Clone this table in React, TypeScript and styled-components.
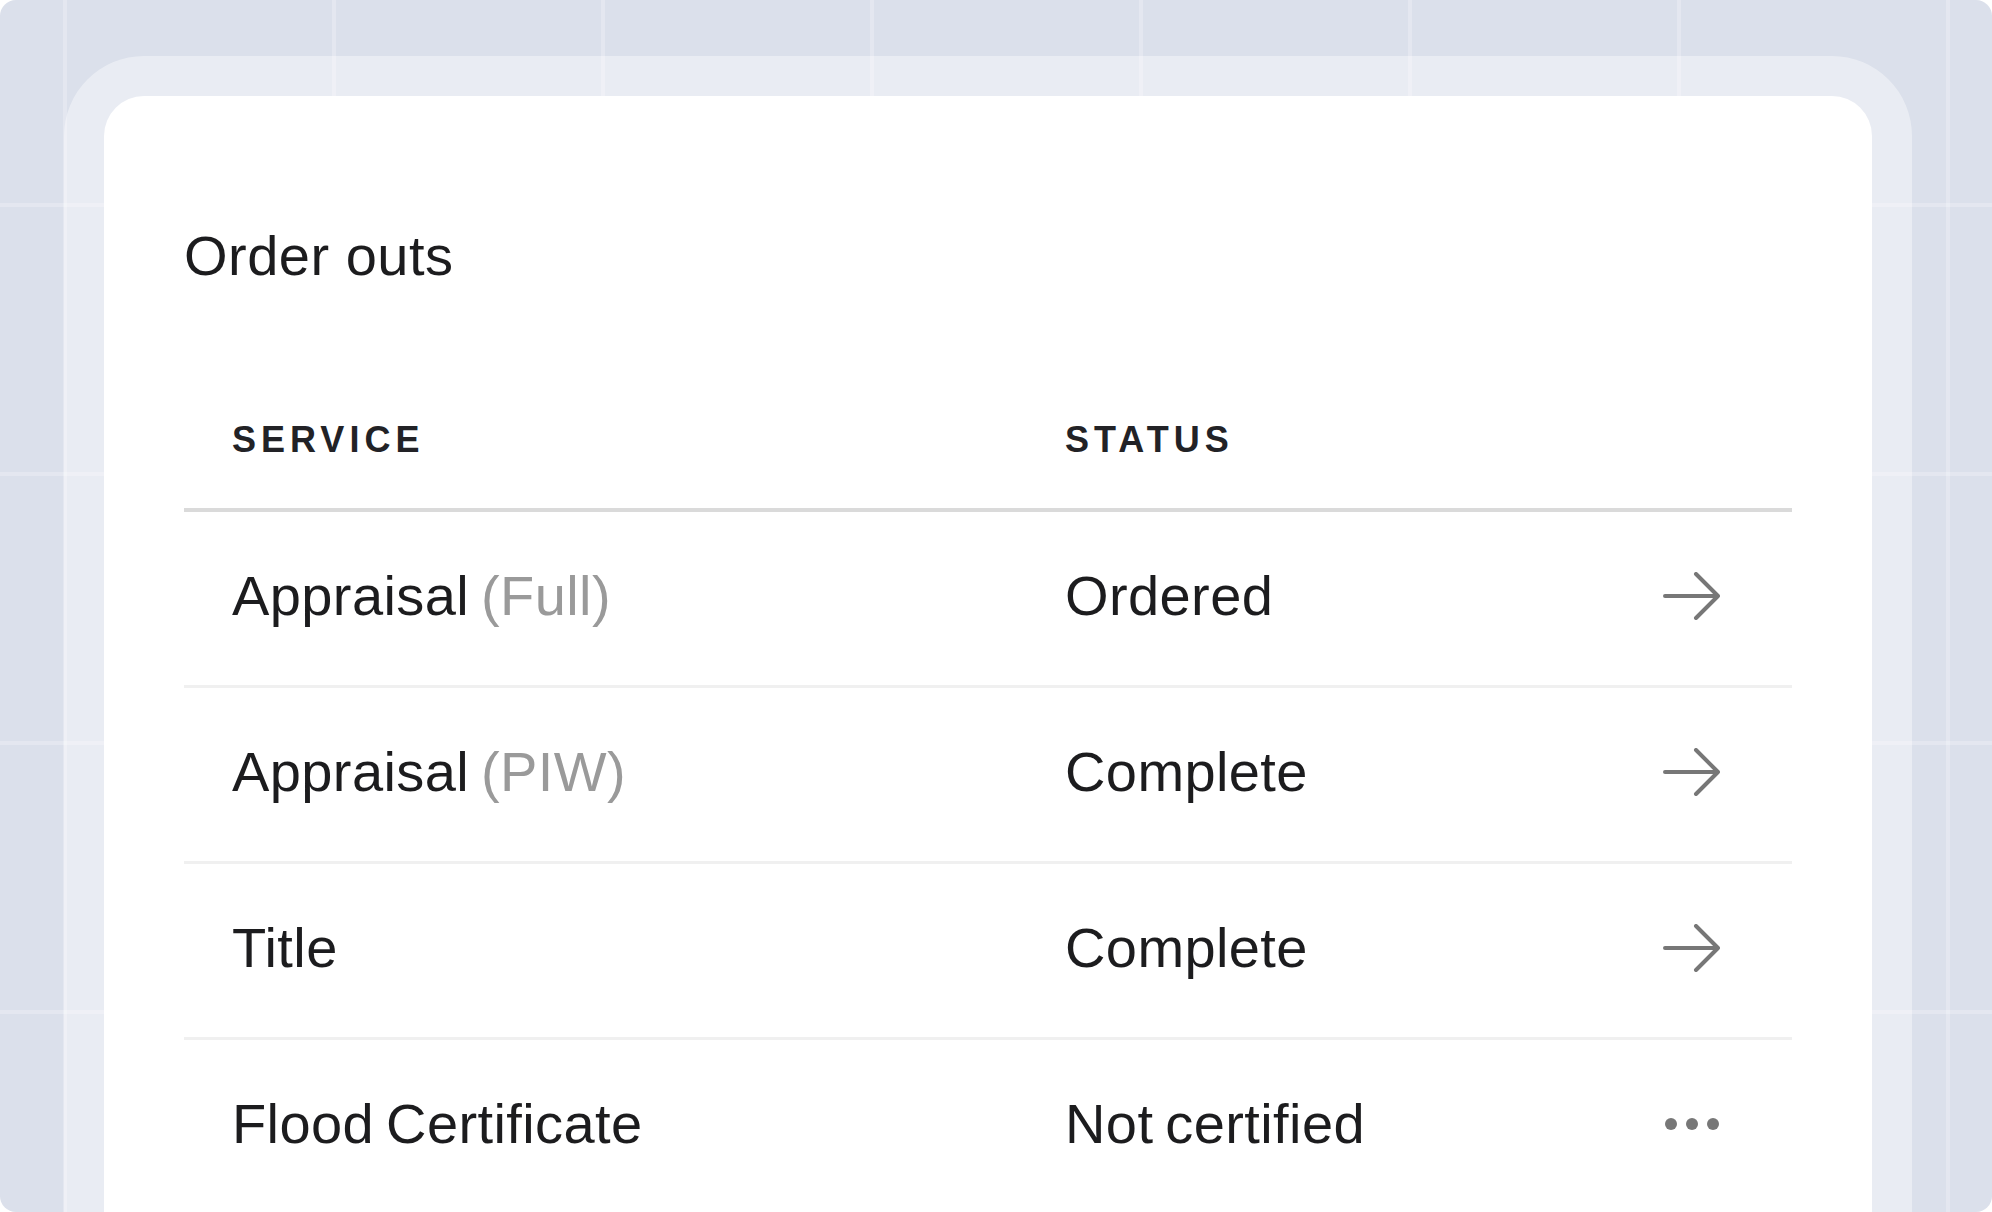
import React from "react";
import styled, { createGlobalStyle } from "styled-components";

const Global = createGlobalStyle`
  html, body { margin: 0; padding: 0; background: #ffffff; }
  body { font-family: "Liberation Sans", Arial, Helvetica, sans-serif; }
  * { box-sizing: border-box; }
`;

const Canvas = styled.div`
  width: 1992px;
  height: 1212px;
  overflow: hidden;
  border-radius: 16px;
  background-color: #dbe0eb;
  background-image:
    linear-gradient(to right, rgba(255, 255, 255, 0.24) 0 4px, transparent 4px),
    linear-gradient(to bottom, rgba(255, 255, 255, 0.24) 0 4px, transparent 4px);
  background-size: 269px 269px;
  background-position: 63px 203px;
  padding: 56px 80px 0 64px;
  display: flex;
  flex-direction: column;
`;

const Frame = styled.div`
  flex: 1;
  background: rgba(255, 255, 255, 0.4);
  border-radius: 80px 80px 0 0;
  padding: 40px 40px 0 40px;
  display: flex;
  flex-direction: column;
`;

const Card = styled.section`
  flex: 1;
  background: #ffffff;
  border-radius: 40px 40px 0 0;
  padding: 128px 80px 0 80px;
  color: #1d1d1f;
`;

const Title = styled.h1`
  margin: 0;
  font-size: 56px;
  line-height: 64px;
  font-weight: 400;
  letter-spacing: 0.5px;
  color: #1c1c1e;
`;

const Table = styled.div`
  display: grid;
  grid-template-columns: 833px 1fr 200px;
  margin-top: 132px;
`;

const HeadCell = styled.div`
  padding: 0 0 48px 48px;
  font-size: 36px;
  line-height: 40px;
  font-weight: 700;
  letter-spacing: 5px;
  text-transform: uppercase;
  color: #222226;
  border-bottom: 4px solid #dadada;
`;

const Cell = styled.div<{ $last?: boolean; $end?: boolean }>`
  height: 176px;
  display: flex;
  align-items: center;
  justify-content: ${(p) => (p.$end ? "flex-end" : "flex-start")};
  padding: ${(p) => (p.$end ? "0 72px 5px 0" : "0 0 5px 48px")};
  font-size: 56px;
  line-height: 64px;
  font-weight: 400;
  letter-spacing: 0.4px;
  word-spacing: -4px;
  color: #1c1c1e;
  border-bottom: 3px solid ${(p) => (p.$last ? "transparent" : "#f0f0f0")};
`;

const Muted = styled.span`
  color: #9a9a9a;
`;

const IconSvg = styled.svg`
  display: block;
  color: #777777;
`;

const Arrow = () => (
  <IconSvg width="57" height="48" viewBox="0 0 57 48" fill="none">
    <path
      d="M2 24H55M33 2L55 24L33 46"
      stroke="currentColor"
      strokeWidth="4"
      strokeLinecap="round"
      strokeLinejoin="round"
    />
  </IconSvg>
);

const Dots = () => (
  <IconSvg width="55" height="14" viewBox="0 0 55 14" fill="currentColor">
    <circle cx="6" cy="7" r="6" />
    <circle cx="27" cy="7" r="6" />
    <circle cx="48" cy="7" r="6" />
  </IconSvg>
);

type Row = { name: string; note?: string; status: string; action: "arrow" | "more" };

const rows: Row[] = [
  { name: "Appraisal", note: "(Full)", status: "Ordered", action: "arrow" },
  { name: "Appraisal", note: "(PIW)", status: "Complete", action: "arrow" },
  { name: "Title", status: "Complete", action: "arrow" },
  { name: "Flood Certificate", status: "Not certified", action: "more" },
];

export default function App() {
  return (
    <>
      <Global />
      <Canvas>
        <Frame>
          <Card>
            <Title>Order outs</Title>
            <Table>
              <HeadCell>Service</HeadCell>
              <HeadCell>Status</HeadCell>
              <HeadCell />
              {rows.map((r, i) => {
                const last = i === rows.length - 1;
                return (
                  <React.Fragment key={i}>
                    <Cell $last={last}>
                      <span>
                        {r.name}
                        {r.note && <Muted> {r.note}</Muted>}
                      </span>
                    </Cell>
                    <Cell $last={last}>{r.status}</Cell>
                    <Cell $last={last} $end>
                      {r.action === "arrow" ? <Arrow /> : <Dots />}
                    </Cell>
                  </React.Fragment>
                );
              })}
            </Table>
          </Card>
        </Frame>
      </Canvas>
    </>
  );
}
